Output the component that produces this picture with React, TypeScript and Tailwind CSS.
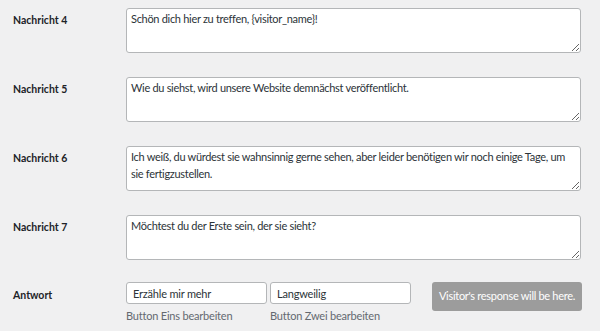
import React from 'react';

const messages = [
  { label: 'Nachricht 4', text: 'Schön dich hier zu treffen, {visitor_name}!' },
  { label: 'Nachricht 5', text: 'Wie du siehst, wird unsere Website demnächst veröffentlicht.' },
  {
    label: 'Nachricht 6',
    text: 'Ich weiß, du würdest sie wahnsinnig gerne sehen, aber leider benötigen wir noch einige Tage, um sie fertigzustellen.',
  },
  { label: 'Nachricht 7', text: 'Möchtest du der Erste sein, der sie sieht?' },
];

const font = { fontFamily: 'Lato, "Noto Sans", sans-serif' };

export default function App() {
  return (
    <div className="w-[600px] h-[331px] bg-[#f0f0f1] text-[#1d2327] pl-[13px] pt-[8px] overflow-hidden" style={font}>
      <div className="flex flex-col gap-[24px]">
        {messages.map((m) => (
          <div key={m.label} className="flex">
            <div className="w-[113px] shrink-0 pt-[4px] text-[10.5px] leading-[17px] font-bold">{m.label}</div>
            <textarea
              readOnly
              defaultValue={m.text}
              className="w-[455px] h-[45px] bg-white border border-[#b4b6b8] rounded-[3px] px-[4px] pt-[1px] text-[11px] tracking-[-0.3px] leading-[17px] text-[#2c3338] outline-none"
              style={font}
            />
          </div>
        ))}
        <div className="flex -mt-[2px]">
          <div className="w-[113px] shrink-0 pt-[5px] text-[10.5px] leading-[17px] font-bold">Antwort</div>
          <div className="flex flex-col gap-[3px]">
            <input
              readOnly
              defaultValue="Erzähle mir mehr"
              className="w-[141px] h-[22px] bg-white border border-[#b4b6b8] rounded-[3px] px-[6px] text-[11px] tracking-[-0.2px] text-[#2c3338] outline-none"
              style={font}
            />
            <span className="text-[11px] tracking-[-0.2px] leading-[17px] text-[#646970]">Button Eins bearbeiten</span>
          </div>
          <div className="flex flex-col gap-[3px] ml-[3px]">
            <input
              readOnly
              defaultValue="Langweilig"
              className="w-[141px] h-[22px] bg-white border border-[#b4b6b8] rounded-[3px] px-[6px] text-[11px] tracking-[-0.2px] text-[#2c3338] outline-none"
              style={font}
            />
            <span className="text-[11px] tracking-[-0.2px] leading-[17px] text-[#646970]">Button Zwei bearbeiten</span>
          </div>
          <div className="ml-[21px] w-[150px] h-[29px] rounded-[3px] bg-[#9c9c9c] text-white text-[11px] tracking-[-0.3px] whitespace-nowrap flex items-center justify-center">
            Visitor's response will be here.
          </div>
        </div>
      </div>
    </div>
  );
}
